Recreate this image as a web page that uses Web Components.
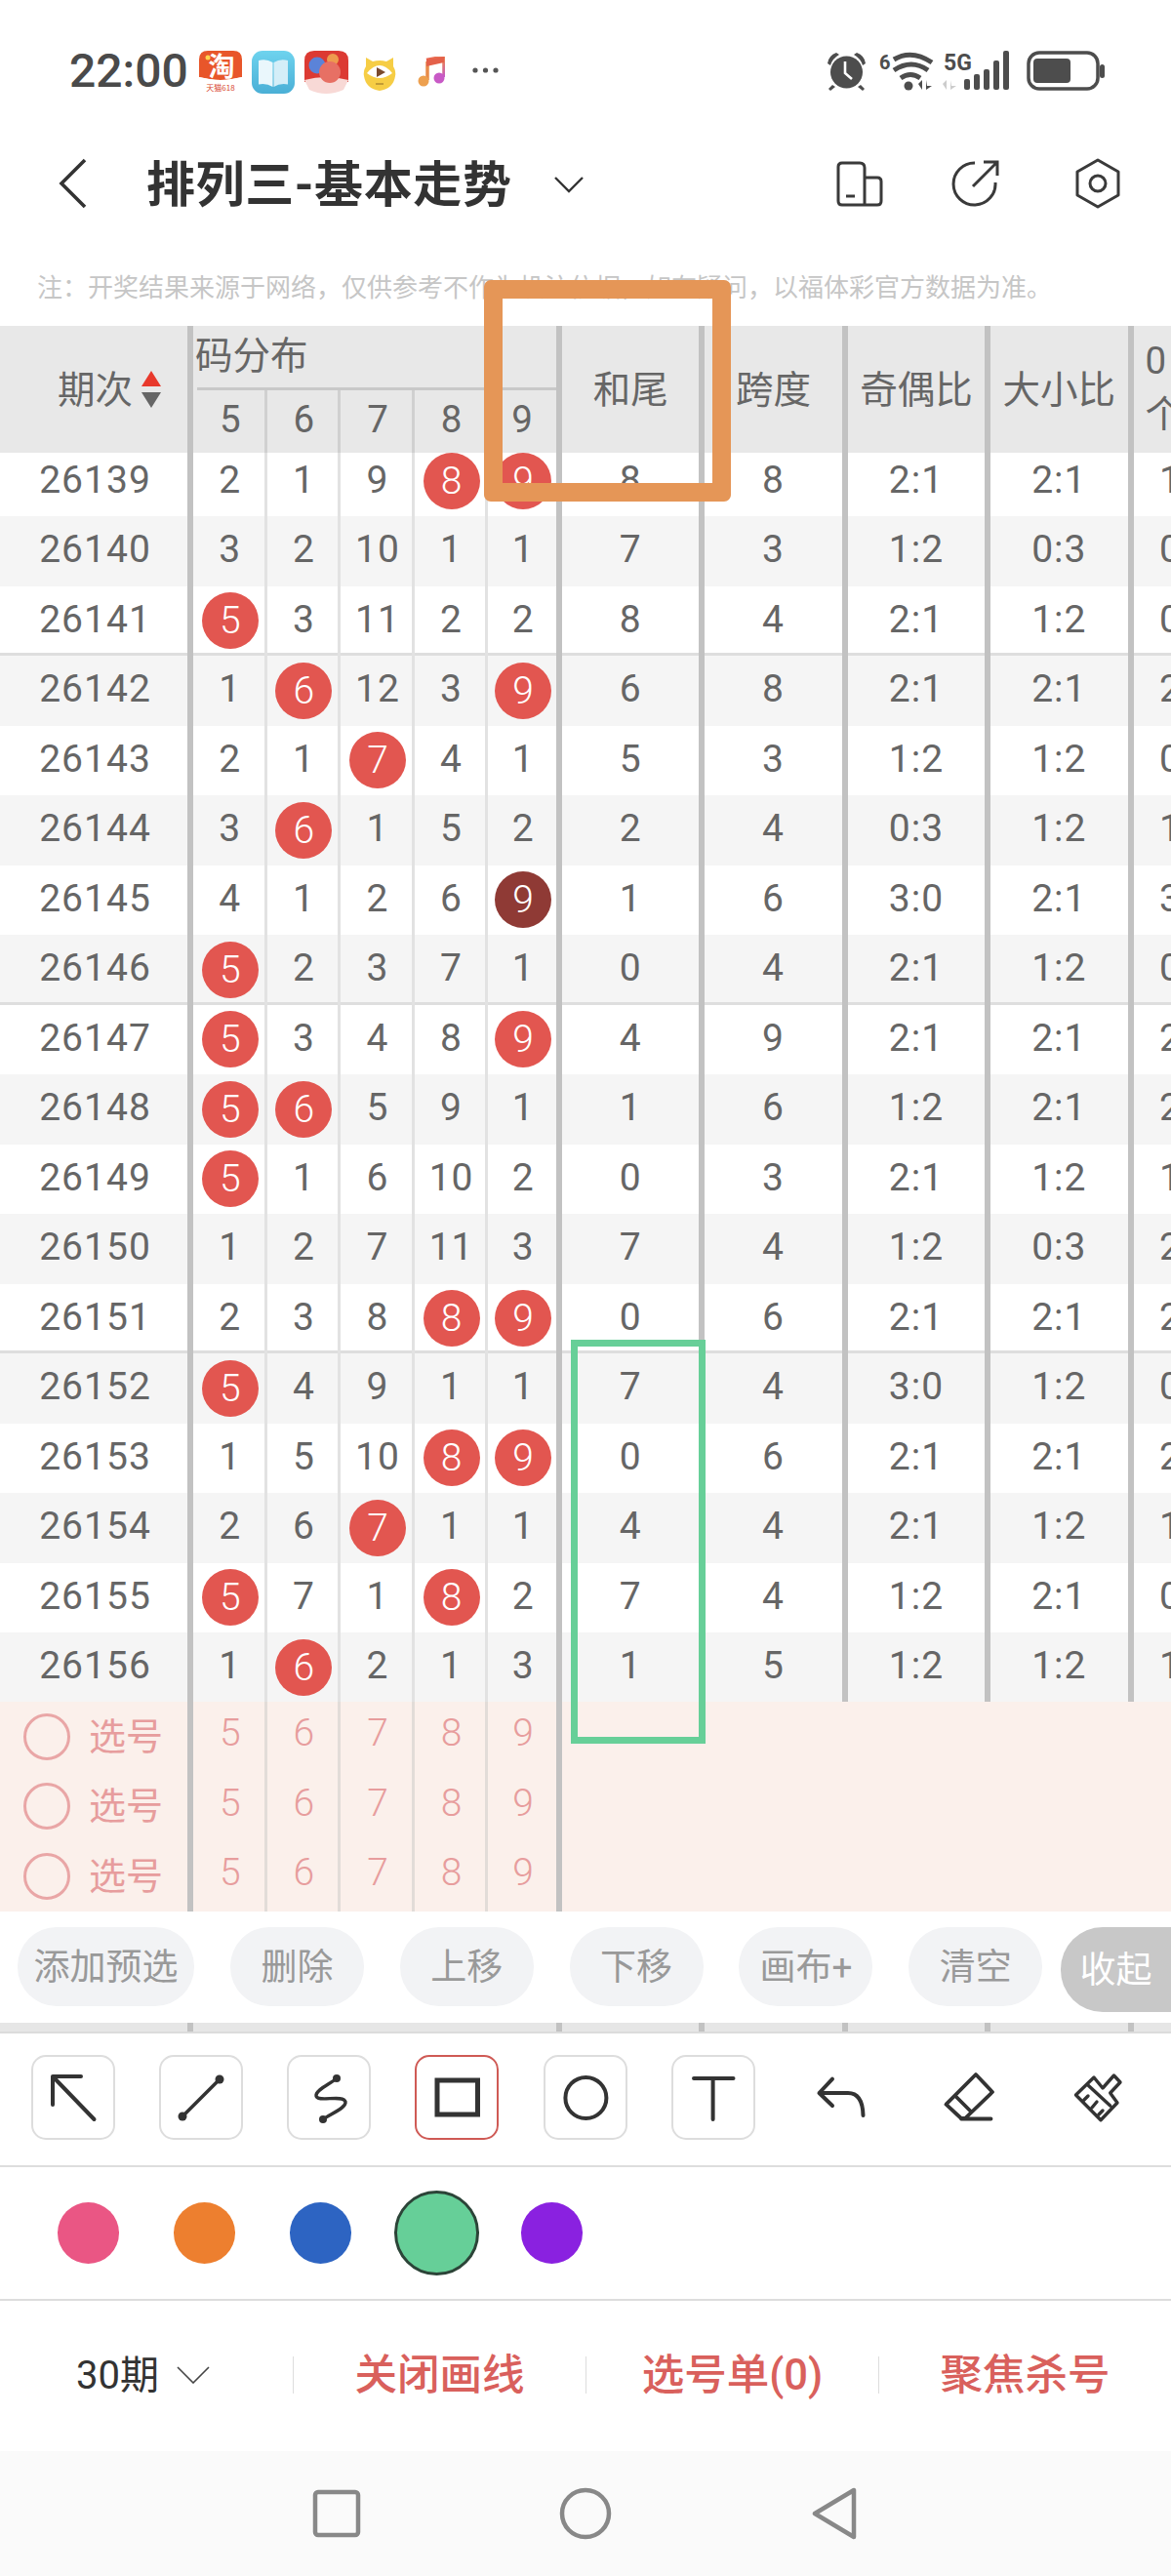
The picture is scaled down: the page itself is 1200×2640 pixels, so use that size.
<!DOCTYPE html>
<html lang="zh">
<head>
<meta charset="utf-8">
<title>排列三-基本走势</title>
<style>
  html, body { margin: 0; background: #fff; }
  body { font-family: Roboto, "Noto Sans CJK SC", sans-serif; color: #666; }
</style>
</head>
<body>
<app-shell>
  <status-bar></status-bar>
  <nav-header title-text="排列三-基本走势"></nav-header>
  <notice-line>注&#xFF1A;开奖结果来源于网络&#xFF0C;仅供参考不作为投注依据&#xFF0C;如有疑问&#xFF0C;以福体彩官方数据为准。</notice-line>
  <trend-table></trend-table>
  <action-pills></action-pills>
  <draw-toolbar></draw-toolbar>
  <color-picker></color-picker>
  <bottom-bar></bottom-bar>
  <nav-keys></nav-keys>
</app-shell>
<script>
// column template shared by the head, the rows and the pick rows
const COLS = '198px repeat(5, 75.6px) repeat(4, 146.4px) 76px';

// period, five digit cells, 和尾, 跨度, 奇偶比, 大小比, last col. * = red ball, # = dark ball
const ROWS = [
  '26139 2 1 9 *8 *9 8 8 2:1 2:1 1',
  '26140 3 2 10 1 1 7 3 1:2 0:3 0',
  '26141 *5 3 11 2 2 8 4 2:1 1:2 0',
  '26142 1 *6 12 3 *9 6 8 2:1 2:1 2',
  '26143 2 1 *7 4 1 5 3 1:2 1:2 0',
  '26144 3 *6 1 5 2 2 4 0:3 1:2 1',
  '26145 4 1 2 6 #9 1 6 3:0 2:1 3',
  '26146 *5 2 3 7 1 0 4 2:1 1:2 0',
  '26147 *5 3 4 8 *9 4 9 2:1 2:1 2',
  '26148 *5 *6 5 9 1 1 6 1:2 2:1 2',
  '26149 *5 1 6 10 2 0 3 2:1 1:2 1',
  '26150 1 2 7 11 3 7 4 1:2 0:3 2',
  '26151 2 3 8 *8 *9 0 6 2:1 2:1 2',
  '26152 *5 4 9 1 1 7 4 3:0 1:2 0',
  '26153 1 5 10 *8 *9 0 6 2:1 2:1 2',
  '26154 2 6 *7 1 1 4 4 2:1 1:2 1',
  '26155 *5 7 1 *8 2 7 4 1:2 2:1 0',
  '26156 1 *6 2 1 3 1 5 1:2 1:2 1'
];

class AppShell extends HTMLElement {
  connectedCallback() {
    const root = this.shadowRoot || this.attachShadow({ mode: 'open' });
    root.innerHTML = `
      <style>
        :host { display: block; position: relative; width: 1200px; height: 2640px; overflow: hidden; background: #fff; }
        .mark { position: absolute; box-sizing: border-box; pointer-events: none; }
        .orange { left: 496px; top: 287px; width: 253px; height: 227px; border: 19px solid #e59657; border-radius: 7px; }
        .green { left: 585px; top: 1373px; width: 138px; height: 414px; border: 7px solid #67cf98; }
      </style>
      <slot></slot>
      <div class="mark orange"></div>
      <div class="mark green"></div>`;
  }
}

class StatusBar extends HTMLElement {
  connectedCallback() {
    const root = this.shadowRoot || this.attachShadow({ mode: 'open' });
    root.innerHTML = `
      <style>
        :host { display: flex; align-items: flex-start; height: 122px; padding: 52px 68px 0 71px; box-sizing: border-box; }
        .time { width: 133px; height: 56px; margin-top: -7px; line-height: 56px; font-size: 48px; font-weight: 500; color: #4a4a4a; white-space: nowrap; }
        svg { display: block; flex: none; }
        .gap10 { margin-left: 10px; }
        .right { margin-left: auto; }
      </style>
      <span class="time">22:00</span>
      <svg width="44" height="44" viewBox="0 0 44 44">
        <path d="M9 0H35Q44 0 44 9V27L22 31L0 27V9Q0 0 9 0Z" fill="#e8562a"/>
        <path d="M0 27Q22 33 44 27V34Q44 44 35 44H9Q0 44 0 34Z" fill="#fff"/>
        <circle cx="9" cy="7" r="2.5" fill="#ffd34d"/>
        <text x="23" y="26" text-anchor="middle" font-size="27" font-weight="700" fill="#fff" font-family="Noto Sans CJK SC">淘</text>
        <text x="22" y="41" text-anchor="middle" font-size="8" fill="#d8452a" font-family="Noto Sans CJK SC">天猫618</text>
      </svg>
      <svg class="gap10" width="44" height="44" viewBox="0 0 44 44">
        <defs><linearGradient id="bk" x1="0" y1="0" x2="0" y2="1"><stop offset="0" stop-color="#6ed3ee"/><stop offset="1" stop-color="#4aafd6"/></linearGradient></defs>
        <rect width="44" height="44" rx="11" fill="url(#bk)"/>
        <path d="M7 10Q15 8 21.5 12V37Q15 33 7 34.5Z" fill="#eaf7fc"/>
        <path d="M37 10Q29 8 22.5 12V37Q29 33 37 34.5Z" fill="#d4eef8"/>
      </svg>
      <svg class="gap10" width="45" height="44" viewBox="0 0 45 44">
        <path d="M10 0H35Q45 0 45 10V32H0V10Q0 0 10 0Z" fill="#dc3a33"/>
        <path d="M0 30Q22 24 45 30L40 40Q22 48 5 40Z" fill="#f8d9d6"/>
        <circle cx="13" cy="15" r="8.5" fill="#5b83d8"/>
        <circle cx="29" cy="9" r="6" fill="#ee9a4e"/>
        <circle cx="26" cy="22" r="11" fill="#e77064"/>
      </svg>
      <svg style="margin-left:15px;margin-top:6px" width="34" height="35" viewBox="0 0 34 35">
        <path d="M3 1L10 5Q17 3 24 5L31 1L31 10Q34 15 33 20Q31 33 17 35Q3 33 1 20Q0 15 3 10Z" fill="#f6cd45"/>
        <path d="M4 17Q17 1 30 17Q17 27 4 17Z" fill="#fff"/>
        <path d="M14 11L23 16L14 21Z" fill="#7b4a2d"/>
        <path d="M13 28H21" stroke="#a07b2a" stroke-width="1.2"/>
      </svg>
      <svg style="margin-left:22px;margin-top:6px" width="28" height="31" viewBox="0 0 28 31">
        <defs><linearGradient id="nt" x1="0" y1="0" x2="1" y2="1"><stop offset="0" stop-color="#ea5d4a"/><stop offset=".6" stop-color="#e8805a"/><stop offset="1" stop-color="#c45ac8"/></linearGradient></defs>
        <path d="M10 5V24" stroke="#e98c4a" stroke-width="3.5"/>
        <path d="M9 3.5L27 0V21" fill="none" stroke="url(#nt)" stroke-width="3.5"/>
        <path d="M9 3.5L27 0V6L9 10Z" fill="#e4614a"/>
        <circle cx="6" cy="25" r="5.5" fill="#eda04f"/>
        <circle cx="22" cy="22" r="5.5" fill="#c85ac6"/>
      </svg>
      <svg style="margin-left:28px;margin-top:16px" width="27" height="8" viewBox="0 0 27 8">
        <circle cx="3" cy="4" r="2.6" fill="#555"/><circle cx="13.5" cy="4" r="2.6" fill="#555"/><circle cx="24" cy="4" r="2.6" fill="#555"/>
      </svg>
      <svg class="right" width="285" height="42" viewBox="847 52 285 42">
        <g fill="#4d4d4d">
          <circle cx="867.5" cy="74" r="16.5"/>
          <path d="M848 65Q849 57 857 54L860 56Q853 60 851 67ZM887 65Q886 57 878 54L875 56Q882 60 884 67Z"/>
          <path d="M853 87L849 91L851 93L856 89ZM882 87L886 91L884 93L879 89Z"/>
        </g>
        <path d="M866 63V75L873 81" fill="none" stroke="#fff" stroke-width="2.6"/>
        <text x="901" y="71" font-size="20" font-weight="700" fill="#4d4d4d" font-family="Roboto">6</text>
        <g fill="none" stroke="#4d4d4d" stroke-width="5">
          <path d="M916 61Q934 50 955 64"/>
          <path d="M915 72Q933 60 950 72" transform="translate(1 0)"/>
          <path d="M924 80Q934 73 944 80" transform="translate(-1 0)"/>
        </g>
        <circle cx="931" cy="88" r="4.5" fill="#4d4d4d"/>
        <path d="M945 92V82L941 86ZM949 82V92L955 88H950Z" fill="#4d4d4d"/>
        <text x="967" y="72" font-size="23" font-weight="700" fill="#4d4d4d" font-family="Roboto" textLength="29">5G</text>
        <path d="M970 92V82L966 86ZM974 82V92L980 88H975Z" fill="#ccc"/>
        <g fill="#4d4d4d">
          <rect x="988" y="81" width="6" height="11" rx="2"/>
          <rect x="998" y="76" width="6" height="16" rx="2"/>
          <rect x="1008" y="71" width="6" height="21" rx="2"/>
          <rect x="1018" y="62" width="6" height="30" rx="2"/>
          <rect x="1028" y="52" width="6" height="40" rx="2"/>
        </g>
        <rect x="1054" y="54" width="71" height="37" rx="11" fill="none" stroke="#4d4d4d" stroke-width="3.5"/>
        <rect x="1059" y="60" width="38" height="25" rx="4" fill="#4d4d4d"/>
        <rect x="1127" y="66" width="5" height="14" rx="2.5" fill="#4d4d4d"/>
      </svg>`;
  }
}

class NavHeader extends HTMLElement {
  connectedCallback() {
    const root = this.shadowRoot || this.attachShadow({ mode: 'open' });
    root.innerHTML = `
      <style>
        :host { display: flex; align-items: center; height: 132px; padding-left: 60px; box-sizing: border-box; }
        svg { display: block; flex: none; }
        h1 { margin: 3px 0 0 60px; font-size: 50px; line-height: 60px; font-weight: 700; color: #333; white-space: nowrap; letter-spacing: .6px; }
        .down { margin-left: 43px; margin-top: 3px; }
        .icons { margin-left: auto; display: flex; align-items: center; padding-right: 52px; }
        .share { margin-left: 70px; }
        .hex { margin-left: 77px; }
      </style>
      <svg width="30" height="52" viewBox="0 0 30 52"><path d="M27 2L3 26L27 50" fill="none" stroke="#333" stroke-width="3.6"/></svg>
      <h1>${this.getAttribute('title-text')}</h1>
      <svg class="down" width="30" height="17" viewBox="0 0 30 17"><path d="M1 1L15 15L29 1" fill="none" stroke="#333" stroke-width="2.4"/></svg>
      <div class="icons">
        <svg width="48" height="47" viewBox="0 0 48 47" fill="none" stroke="#3a3a3a" stroke-width="3">
          <path d="M29 45H6Q2 45 2 41V6Q2 2 6 2H24Q29 2 29 7V45H42Q46 45 46 41V21Q46 17 42 17H29"/>
          <path d="M10 36H19"/>
        </svg>
        <svg class="share" width="50" height="50" viewBox="0 0 50 50" fill="none" stroke="#3a3a3a" stroke-width="3">
          <path d="M24 4A21.5 21.5 0 1 0 45 24"/>
          <path d="M22 28L46 4M33 3H47V17"/>
        </svg>
        <svg class="hex" width="46" height="52" viewBox="0 0 46 52" fill="none" stroke="#3a3a3a" stroke-width="3">
          <path d="M23 2L44 14V38L23 50L2 38V14Z" stroke-linejoin="round"/>
          <circle cx="23" cy="26" r="8"/>
        </svg>
      </div>`;
  }
}

class NoticeLine extends HTMLElement {
  connectedCallback() {
    const root = this.shadowRoot || this.attachShadow({ mode: 'open' });
    root.innerHTML = `
      <style>
        :host { display: block; height: 80px; padding: 3px 0 0 38px; box-sizing: border-box; font-size: 26px; line-height: 77px; color: #c6c6c6; white-space: nowrap; }
      </style>
      <slot></slot>`;
  }
}

class TableHead extends HTMLElement {
  connectedCallback() {
    const root = this.shadowRoot || this.attachShadow({ mode: 'open' });
    const subs = [5, 6, 7, 8, 9].map((n, i) =>
      `<span class="sub${i === 4 ? ' end' : ''}">${n}</span>`).join('');
    const singles = ['和尾', '跨度', '奇偶比', '大小比'].map(t => `<div class="cell">${t}</div>`).join('');
    root.innerHTML = `
      <style>
        :host { display: grid; grid-template-columns: ${COLS}; height: 130px; background: #e8e8e8; font-size: 38.5px; color: #666; }
        .cell, .first { display: flex; align-items: center; justify-content: center; box-sizing: border-box; border-right: 6px solid #c2c2c2; }
        .cell { padding-bottom: 7px; }
        .first { justify-content: flex-start; padding-left: 59px; gap: 9px; }
        .first span { margin-bottom: 7px; }
        .first svg { display: block; }
        .group { grid-column: span 5; display: grid; grid-template-rows: 66px 64px; box-sizing: border-box; border-right: 6px solid #c2c2c2; }
        .title { line-height: 62px; white-space: nowrap; overflow: hidden; }
        .rule { border-bottom: 3px solid #c8c8c8; margin-left: 4px; box-sizing: border-box; }
        .subs { display: grid; grid-template-columns: repeat(4, 75.6px) 1fr; }
        .sub { display: flex; align-items: center; justify-content: center; box-sizing: border-box; border-right: 3px solid #d0d0d0; padding: 0 0 5px 3px; }
        .sub.end { border-right: 0; padding-left: 0; }
        .last { padding: 8px 0 0 12px; line-height: 55px; }
      </style>
      <div class="first"><span>期次</span>
        <svg width="20" height="38" viewBox="0 0 20 38"><path d="M10 0L20 16H0Z" fill="#e8392c"/><path d="M0 22H20L10 38Z" fill="#666"/></svg>
      </div>
      <div class="group">
        <div class="rule"><div class="title" style="margin-left:-2px">码分布</div></div>
        <div class="subs">${subs}</div>
      </div>
      ${singles}
      <div class="last">0<br>个</div>`;
  }
}

class TrendRow extends HTMLElement {
  connectedCallback() {
    const root = this.shadowRoot || this.attachShadow({ mode: 'open' });
    const v = this.getAttribute('values').split(' ');
    const cell = (val, cls) => {
      if (val[0] === '*' || val[0] === '#') {
        return `<div class="${cls}"><span class="ball${val[0] === '#' ? ' dark' : ''}">${val.slice(1)}</span></div>`;
      }
      return `<div class="${cls}">${val}</div>`;
    };
    const html = v.map((val, i) => {
      if (i === 0) return cell(val, 'c thick lead');
      if (i < 5) return cell(val, 'c thin');
      if (i === 5) return cell(val, 'c thick nudge');
      if (i === 10) return cell(val, 'c');
      return cell(val, 'c thick');
    }).join('');
    root.innerHTML = `
      <style>
        :host { display: grid; grid-template-columns: ${COLS}; height: 71.5px; font-size: 39px; letter-spacing: 1px; color: #666; background: #fff; }
        :host([even]) { background: #f5f5f5; }
        .c { display: flex; align-items: center; justify-content: center; box-sizing: border-box; padding-bottom: 3px; }
        :host([sep]) .c { box-shadow: inset 0 -3px 0 #dedede; }
        .thick { border-right: 6px solid #c2c2c2; }
        .thin { border-right: 3px solid #e2e2e2; padding-left: 3px; }
        .nudge { padding-left: 2px; }
        .lead { padding-left: 3px; }
        .ball { width: 58px; height: 58px; margin-bottom: -3px; border-radius: 50%; background: #e25650; color: #fff; font-weight: 300; letter-spacing: 0; display: flex; align-items: center; justify-content: center; }
        .ball.dark { background: #8f3a35; }
      </style>
      ${html}`;
  }
}

class PickRow extends HTMLElement {
  connectedCallback() {
    const root = this.shadowRoot || this.attachShadow({ mode: 'open' });
    root.innerHTML = `
      <style>
        :host { display: grid; grid-template-columns: 198px repeat(5, 75.6px) 1fr; height: 71.5px; background: #fbf0eb; color: #e79d9d; font-size: 39px; font-weight: 300; }
        .c { display: flex; align-items: center; justify-content: center; box-sizing: border-box; padding-bottom: 7px; }
        .pick { justify-content: flex-start; padding: 0 0 0 24px; gap: 19px; font-size: 38px; font-weight: 400; border-right: 6px solid #c2c2c2; }
        .pick span:last-child { margin-bottom: 7px; }
        .radio { width: 48px; height: 48px; box-sizing: border-box; border: 3px solid #e9a6a6; border-radius: 50%; }
        .thin { border-right: 3px solid #e2dcd8; padding-left: 3px; }
        .thick { border-right: 6px solid #c2c2c2; padding-left: 2px; }
      </style>
      <div class="c pick"><span class="radio"></span><span>选号</span></div>
      <div class="c thin">5</div><div class="c thin">6</div><div class="c thin">7</div><div class="c thin">8</div>
      <div class="c thick">9</div>
      <div></div>`;
  }
}

class TrendTable extends HTMLElement {
  connectedCallback() {
    const root = this.shadowRoot || this.attachShadow({ mode: 'open' });
    root.innerHTML = `
      <style>
        :host { display: block; height: 1624px; }
        .body { height: 1280px; overflow: hidden; }
        .scroll { margin-top: -6.5px; }
      </style>
      <table-head></table-head>
      <div class="body"><div class="scroll"></div></div>
      <pick-row></pick-row><pick-row></pick-row><pick-row></pick-row>`;
    const scroll = root.querySelector('.scroll');
    ROWS.forEach((r, i) => {
      const row = document.createElement('trend-row');
      row.setAttribute('values', r);
      if (i % 2 === 1) row.setAttribute('even', '');
      if (i % 5 === 2 && i < 17) row.setAttribute('sep', '');
      scroll.appendChild(row);
    });
  }
}

class ActionPills extends HTMLElement {
  connectedCallback() {
    const root = this.shadowRoot || this.attachShadow({ mode: 'open' });
    root.innerHTML = `
      <style>
        :host { display: block; height: 126px; }
        .bar { display: flex; align-items: flex-start; height: 115px; padding: 17px 0 0 18px; box-sizing: border-box; }
        .pill { flex: none; width: 137px; height: 81px; padding-bottom: 5px; box-sizing: border-box; margin-right: 36.8px; border-radius: 40px; background: #f2f3f5; color: #999; font-size: 37px; display: flex; align-items: center; justify-content: center; white-space: nowrap; }
        .wide { width: 181px; margin-right: 37px; }
        .fold { width: 113px; height: 87px; margin: 0 0 0 -18px; border-radius: 43px 0 0 43px; background: #c8c8c8; color: #fff; }
        .strip { display: grid; grid-template-columns: ${COLS}; height: 9px; background: #e6e6e6; border-bottom: 2px solid #dcdcdc; }
        .strip i { border-right: 6px solid #c2c2c2; }
      </style>
      <div class="bar">
        <span class="pill wide">添加预选</span>
        <span class="pill">删除</span><span class="pill">上移</span><span class="pill">下移</span>
        <span class="pill">画布+</span><span class="pill">清空</span>
        <span class="pill fold">收起</span>
      </div>
      <div class="strip"><i></i><i style="grid-column:span 5"></i><i></i><i></i><i></i><i></i></div>`;
  }
}

class DrawToolbar extends HTMLElement {
  connectedCallback() {
    const root = this.shadowRoot || this.attachShadow({ mode: 'open' });
    const stroke = 'fill="none" stroke="#333" stroke-linecap="round" stroke-linejoin="round"';
    const tools = [
      `<path d="M51 22H22V51M22 22L64.5 66" ${stroke} stroke-width="4"/>`,
      `<path d="M24 63L62 25" ${stroke} stroke-width="3.6"/><circle cx="24" cy="63" r="4.5" fill="#333"/><circle cx="62" cy="25" r="4.5" fill="#333"/>`,
      `<path d="M51 24C44 30 29 36 30 42C31 49 58 40 60 48C61 54 46 60 37 66" ${stroke} stroke-width="3.4"/><circle cx="51" cy="24" r="4" fill="#333"/><circle cx="37" cy="66" r="4" fill="#333"/>`,
      `<rect x="23" y="26" width="41.5" height="35" fill="none" stroke="#333" stroke-width="5"/>`,
      `<circle cx="43.4" cy="44" r="21" fill="none" stroke="#333" stroke-width="4"/>`,
      `<path d="M23 24H63.5M42.6 24V66" ${stroke} stroke-width="4"/>`
    ].map((p, i) => `<span class="tool${i === 3 ? ' on' : ''}"><svg width="86" height="87" viewBox="0 0 86 87">${p}</svg></span>`).join('');
    root.innerHTML = `
      <style>
        :host { display: flex; gap: 45.3px; height: 137px; padding: 22px 0 0 31.6px; box-sizing: border-box; border-bottom: 2px solid #ddd; }
        .tool { flex: none; width: 86px; height: 87px; position: relative; }
        .tool::before { content: ""; position: absolute; inset: 0; box-sizing: border-box; border: 2px solid #ddd; border-radius: 15px; }
        .tool.on::before { border-color: #cf5a55; }
        .plain { flex: none; width: 86px; height: 87px; }
        svg { display: block; position: relative; }
      </style>
      ${tools}
      <span class="plain"><svg width="86" height="87" viewBox="0 0 86 87"><path d="M34 24.7L20.5 39L34 52M20.5 39H50Q65 39 65.5 62" ${stroke} stroke-width="4"/></svg></span>
      <span class="plain"><svg width="86" height="87" viewBox="0 0 86 87"><path d="M49 20L66 38L38 65H34L18.5 50.7ZM28 42L43 57M34 65.5H64.5" ${stroke} stroke-width="3.8"/></svg></span>
      <span class="plain"><svg width="86" height="87" viewBox="0 0 86 87"><path d="M39 23L48 34L59.5 21L66 28L55.7 39L63 49L46 66.7L20.5 41ZM32.7 30.7L55.7 52M29 46L33 42M37 54L42 48M44 61L48 57" ${stroke} stroke-width="3.4"/></svg></span>`;
  }
}

class ColorPicker extends HTMLElement {
  connectedCallback() {
    const root = this.shadowRoot || this.attachShadow({ mode: 'open' });
    root.innerHTML = `
      <style>
        :host { display: flex; align-items: center; height: 137px; padding-left: 59px; box-sizing: border-box; border-bottom: 2px solid #ddd; }
        i { display: block; flex: none; width: 63px; height: 63px; border-radius: 50%; }
        .on { width: 87px; height: 87px; box-sizing: border-box; border: 3px solid #2c4438; }
      </style>
      <i style="background:#ea5684"></i>
      <i style="background:#ed7f2f;margin-left:56px"></i>
      <i style="background:#2d64c2;margin-left:56px"></i>
      <i class="on" style="background:#66cf98;margin-left:44px"></i>
      <i style="background:#8a21e0;margin-left:43px"></i>`;
  }
}

class BottomBar extends HTMLElement {
  connectedCallback() {
    const root = this.shadowRoot || this.attachShadow({ mode: 'open' });
    root.innerHTML = `
      <style>
        :host { display: grid; grid-template-columns: repeat(4, 300px); align-items: center; height: 154px; padding-bottom: 3px; box-sizing: border-box; font-size: 43.5px; color: #d9605c; }
        div { display: flex; align-items: center; justify-content: center; height: 38px; padding-bottom: 6px; white-space: nowrap; box-sizing: border-box; border-left: 1px solid #ddd; font-weight: 500; }
        .period { border-left: 0; justify-content: flex-start; padding-left: 78px; gap: 18px; color: #333; font-size: 40px; font-weight: 400; }
        .period svg { margin-top: 6px; }
      </style>
      <div class="period"><span>30期</span>
        <svg width="34" height="18" viewBox="0 0 34 18"><path d="M1 1L17 17L33 1" fill="none" stroke="#444" stroke-width="1.6"/></svg>
      </div>
      <div>关闭画线</div><div>选号单(0)</div><div>聚焦杀号</div>`;
  }
}

class NavKeys extends HTMLElement {
  connectedCallback() {
    const root = this.shadowRoot || this.attachShadow({ mode: 'open' });
    root.innerHTML = `
      <style>
        :host { display: flex; justify-content: center; gap: 195px; height: 128px; padding-top: 37px; box-sizing: border-box; background: #fafafa; }
        svg { display: block; }
      </style>
      <svg width="60" height="54" viewBox="0 0 60 54"><rect x="8" y="5" width="44" height="44" rx="3" fill="none" stroke="#888" stroke-width="4.5"/></svg>
      <svg width="60" height="54" viewBox="0 0 60 54"><circle cx="30" cy="27" r="24" fill="none" stroke="#888" stroke-width="4.5"/></svg>
      <svg width="60" height="54" viewBox="0 0 60 54"><path d="M50 3V51L10 27Z" fill="none" stroke="#888" stroke-width="4.5" stroke-linejoin="round"/></svg>`;
  }
}

customElements.define('status-bar', StatusBar);
customElements.define('nav-header', NavHeader);
customElements.define('notice-line', NoticeLine);
customElements.define('table-head', TableHead);
customElements.define('trend-row', TrendRow);
customElements.define('pick-row', PickRow);
customElements.define('trend-table', TrendTable);
customElements.define('action-pills', ActionPills);
customElements.define('draw-toolbar', DrawToolbar);
customElements.define('color-picker', ColorPicker);
customElements.define('bottom-bar', BottomBar);
customElements.define('nav-keys', NavKeys);
customElements.define('app-shell', AppShell);
</script>
</body>
</html>
